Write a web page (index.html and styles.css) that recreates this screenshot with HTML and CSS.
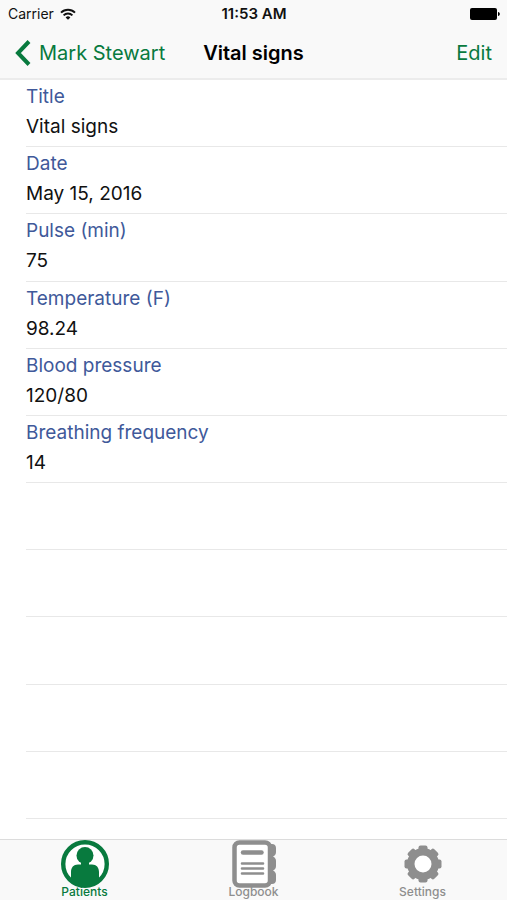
FILE: index.html
```html
<!DOCTYPE html>
<html lang="en">
<head>
<meta charset="utf-8">
<meta name="viewport" content="width=device-width, initial-scale=1">
<title>Vital signs</title>
<link rel="stylesheet" href="styles.css">
</head>
<body>
<header class="top">
  <div class="status">
    <div class="carrier">
      <span>Carrier</span>
      <svg width="16" height="12" viewBox="0 0 16 12" fill="none" stroke="#111" stroke-width="2" aria-hidden="true">
        <path d="M1 4.600a10 10 0 0 1 14 0M3.600 7.400a6.300 6.300 0 0 1 8.800 0"/>
        <path d="M8 11.800 5.600 9.400a3.400 3.400 0 0 1 4.800 0z" fill="#111" stroke="none"/>
      </svg>
    </div>
    <time class="clock">11:53 AM</time>
    <svg class="battery" width="30" height="12" viewBox="0 0 30 12" aria-hidden="true">
      <rect width="27" height="12" rx="2"/>
      <path d="M28 4c1.300.4 1.800 1.100 1.800 2s-.5 1.600-1.800 2z"/>
    </svg>
  </div>
  <nav class="bar">
    <a class="back" href="#patient">
      <svg width="16" height="26" viewBox="0 0 16 26" fill="none" stroke="#087a3e" stroke-width="4" aria-hidden="true"><path d="M14 1.500 3 13l11 11.500"/></svg>
      <span>Mark Stewart</span>
    </a>
    <h1>Vital signs</h1>
    <button class="edit" type="button">Edit</button>
  </nav>
</header>
<main>
  <dl class="list">
    <div class="row"><dt>Title</dt><dd>Vital signs</dd></div>
    <div class="row"><dt>Date</dt><dd>May 15, 2016</dd></div>
    <div class="row"><dt>Pulse (min)</dt><dd>75</dd></div>
    <div class="row"><dt>Temperature (F)</dt><dd>98.24</dd></div>
    <div class="row"><dt>Blood pressure</dt><dd>120/80</dd></div>
    <div class="row"><dt>Breathing frequency</dt><dd>14</dd></div>
    <div class="row"></div>
    <div class="row"></div>
    <div class="row"></div>
    <div class="row"></div>
    <div class="row"></div>
  </dl>
</main>
<nav class="tabs">
  <a class="tab active" href="#patients">
    <svg width="48" height="48" viewBox="0 0 48 48" aria-hidden="true">
      <circle cx="24" cy="24" r="21.800" fill="#fff" stroke="currentColor" stroke-width="4.400"/>
      <circle cx="24" cy="15.500" r="8.500" fill="currentColor"/>
      <path d="M20 20h8v4.500h3c4.500 0 7 3 7 7.500V42c-4 3.500-9 5-14 5s-10-1.500-14-5V32c0-4.500 2.500-7.500 7-7.500h3z" fill="currentColor"/>
    </svg>
    <span>Patients</span>
  </a>
  <a class="tab" href="#logbook">
    <svg width="48" height="48" viewBox="0 0 48 48" aria-hidden="true">
      <path d="M38 4h4c2.500 0 4 1.500 4 4v4c0 2-1 3.500-3 4.500 2 1 3 2.500 3 4.500v5c0 2-1 3.500-3 4.500 2 1 3 2.500 3 4.500v5c0 2.500-1.500 4-4 4h-4z" fill="currentColor"/>
      <rect x="4.500" y="2.500" width="35.500" height="43" rx="5" fill="#fff" stroke="currentColor" stroke-width="4.500"/>
      <path d="M13 12.500h18.500" stroke="currentColor" stroke-width="4.500" stroke-linecap="round"/>
      <path d="M12 23.500h21M12 28.500h21M12 33.500h21" stroke="currentColor" stroke-width="2.600" stroke-linecap="round"/>
    </svg>
    <span>Logbook</span>
  </a>
  <a class="tab" href="#settings">
    <svg width="48" height="48" viewBox="0 0 48 48" aria-hidden="true">
      <g fill="currentColor">
        <rect x="19.500" y="5.500" width="9" height="37" rx="2"/>
        <rect x="19.500" y="5.500" width="9" height="37" rx="2" transform="rotate(45 24 24)"/>
        <rect x="19.500" y="5.500" width="9" height="37" rx="2" transform="rotate(90 24 24)"/>
        <rect x="19.500" y="5.500" width="9" height="37" rx="2" transform="rotate(135 24 24)"/>
        <circle cx="24" cy="24" r="16"/>
      </g>
      <circle cx="24" cy="24" r="8.500" fill="#fff"/>
    </svg>
    <span>Settings</span>
  </a>
</nav>
</body>
</html>
```
FILE: styles.css
```css
* { box-sizing: border-box; }

body {
  margin: 0;
  min-height: 100vh;
  display: flex;
  flex-direction: column;
  background: #fff;
  color: #111;
  font-family: Inter, "Liberation Sans", sans-serif;
}

a { color: inherit; text-decoration: none; }

.top {
  background: #f9f9f9;
  border-bottom: 2px solid #ececec;
}

.status,
.bar {
  display: grid;
  grid-template-columns: 1fr auto 1fr;
  align-items: center;
}

.status {
  height: 27px;
  padding: 0 7px 0 8px;
  font-size: 14px;
}

.carrier { display: flex; align-items: center; gap: 6px; }
.clock { font-size: 15px; font-weight: 600; }
.battery { justify-self: end; }

.bar {
  height: 51px;
  padding: 0 15px;
  font-size: 20px;
}

.back {
  display: flex;
  align-items: center;
  gap: 8px;
  color: #087a3e;
}

h1 { margin: 0; font-size: 20px; font-weight: 600; color: #000; }

.edit {
  justify-self: end;
  padding: 0;
  border: 0;
  background: none;
  color: #087a3e;
  font: inherit;
}

main {
  flex: 1;
  display: flex;
  padding-bottom: 20px;
}

.list {
  flex: 1;
  margin: 0;
  padding-left: 26px;
  display: grid;
  grid-template-rows: repeat(11, 1fr);
}

.row {
  padding-top: 2px;
  border-bottom: 1px solid #e8e8e8;
  font-size: 19px;
  line-height: 30px;
}

dt { color: #40599a; }
dd { margin: 0; }

.tabs {
  display: grid;
  grid-template-columns: repeat(3, 1fr);
  height: 61px;
  background: #f9f9f9;
  border-top: 1px solid #dcdcdc;
}

.tab {
  display: flex;
  flex-direction: column;
  align-items: center;
  color: #8e8e8e;
  font-size: 12px;
  font-weight: 500;
  line-height: 8px;
}

.active { color: #087a3e; }
```
